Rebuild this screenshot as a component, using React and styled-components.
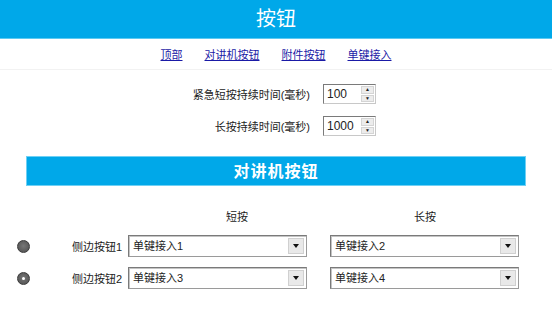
import React from "react";
import styled, { createGlobalStyle } from "styled-components";

const Global = createGlobalStyle`
  body {
    margin: 0;
    background: #fff;
    font-family: "Liberation Sans", "Noto Sans CJK SC", sans-serif;
    color: #222;
  }
`;

const BLUE = "#00a8e9";

const Header = styled.div`
  height: 38px;
  line-height: 38px;
  background: ${BLUE};
  color: #fff;
  text-align: center;
  font-size: 20px;
  border-bottom: 1px solid #5ccaf2;
`;

const Nav = styled.nav`
  height: 30px;
  display: flex;
  justify-content: center;
  align-items: center;
  padding-left: 22px;
  border-bottom: 1px solid #f2f2f2;
`;

const NavLink = styled.a`
  font-size: 11px;
  color: #1a1aa6;
  text-decoration: underline;
  margin-right: 22px;
  cursor: pointer;
`;

const Form = styled.div`
  display: grid;
  grid-template-columns: 310px auto;
  column-gap: 13px;
  row-gap: 12px;
  align-items: center;
  padding-top: 14px;
`;

const FieldLabel = styled.span`
  font-size: 11px;
  text-align: right;
`;

const Spin = styled.div`
  width: 53px;
  height: 20px;
  box-sizing: border-box;
  display: flex;
  border: 1px solid #7a7a7a;
  border-right-color: #c8c8c8;
  border-bottom-color: #c8c8c8;
  background: #fff;
`;

const SpinValue = styled.span`
  flex: 1;
  font-size: 12px;
  line-height: 18px;
  padding-left: 3px;
`;

const SpinButtons = styled.div`
  width: 13px;
  display: flex;
  flex-direction: column;
  margin: 1px;
  gap: 1px;
`;

const SpinButton = styled.div`
  flex: 1;
  background: #ececec;
  border: 1px solid #d4d4d4;
  display: flex;
  align-items: center;
  justify-content: center;
  font-size: 5px;
  line-height: 1;
  color: #222;
`;

const SectionBar = styled.div`
  margin: 20px 26px 0;
  height: 30px;
  line-height: 30px;
  background: ${BLUE};
  border: 1px solid #6fd0f4;
  box-sizing: border-box;
  color: #fff;
  font-size: 16px;
  font-weight: bold;
  letter-spacing: 1px;
  text-align: center;
`;

const Table = styled.div`
  display: grid;
  grid-template-columns: 55px 56px 202px 189px;
  padding: 22px 0 0 17px;
  row-gap: 10px;
  align-items: center;
`;

const ColHead = styled.span`
  font-size: 11px;
  padding-left: ${(p) => p.$offset}px;
  margin-bottom: 1px;
`;

const Dot = styled.span`
  width: 13px;
  height: 13px;
  border-radius: 50%;
  background: radial-gradient(circle at 50% 45%, #777 0%, #5a5a5a 70%);
  border: 1px solid #3a3a3a;
  box-sizing: border-box;
  display: flex;
  align-items: center;
  justify-content: center;

  &::after {
    content: "";
    width: 3px;
    height: 3px;
    border-radius: 50%;
    background: #fff;
    display: ${(p) => (p.$checked ? "block" : "none")};
  }
`;

const RowLabel = styled.span`
  font-size: 11px;
`;

const Select = styled.div`
  width: ${(p) => p.$width}px;
  height: 22px;
  box-sizing: border-box;
  display: flex;
  align-items: stretch;
  border: 1px solid #7a7a7a;
  border-right-color: #9a9a9a;
  border-bottom-color: #9a9a9a;
  box-shadow: inset 1px 1px 0 #c4c4c4;
  background: #fff;
`;

const SelectText = styled.span`
  flex: 1;
  font-size: 11px;
  line-height: 20px;
  padding-left: 4px;
`;

const SelectArrow = styled.span`
  width: 14px;
  margin: 2px;
  background: #e9e9e9;
  border: 1px solid #d0d0d0;
  display: flex;
  align-items: center;
  justify-content: center;

  &::after {
    content: "";
    border-left: 3.5px solid transparent;
    border-right: 3.5px solid transparent;
    border-top: 4px solid #111;
  }
`;

const rows = [
  { label: "侧边按钮1", short: "单键接入1", long: "单键接入2", checked: false },
  { label: "侧边按钮2", short: "单键接入3", long: "单键接入4", checked: true },
];

const NumberField = ({ value }) => (
  <Spin>
    <SpinValue>{value}</SpinValue>
    <SpinButtons>
      <SpinButton>▲</SpinButton>
      <SpinButton>▼</SpinButton>
    </SpinButtons>
  </Spin>
);

const App = () => {
  return (
    <>
      <Global />
      <Header>按钮</Header>
      <Nav>
        <NavLink>顶部</NavLink>
        <NavLink>对讲机按钮</NavLink>
        <NavLink>附件按钮</NavLink>
        <NavLink>单键接入</NavLink>
      </Nav>
      <Form>
        <FieldLabel>紧急短按持续时间(毫秒)</FieldLabel>
        <NumberField value="100" />
        <FieldLabel>长按持续时间(毫秒)</FieldLabel>
        <NumberField value="1000" />
      </Form>
      <SectionBar>对讲机按钮</SectionBar>
      <Table>
        <span />
        <span />
        <ColHead $offset={98}>短按</ColHead>
        <ColHead $offset={84}>长按</ColHead>
        {rows.map((r) => (
          <React.Fragment key={r.label}>
            <Dot $checked={r.checked} />
            <RowLabel>{r.label}</RowLabel>
            <Select $width={179}>
              <SelectText>{r.short}</SelectText>
              <SelectArrow />
            </Select>
            <Select $width={189}>
              <SelectText>{r.long}</SelectText>
              <SelectArrow />
            </Select>
          </React.Fragment>
        ))}
      </Table>
    </>
  );
};

export default App;
